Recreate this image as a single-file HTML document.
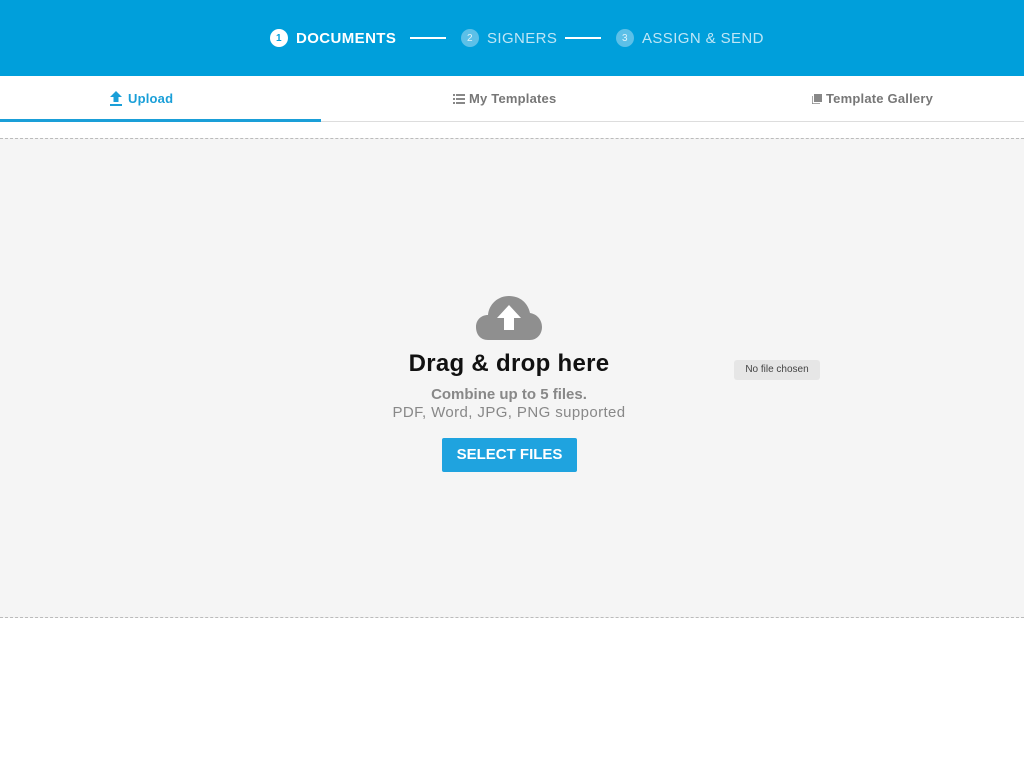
<!DOCTYPE html>
<html><head><meta charset="utf-8"><style>
*{margin:0;padding:0;box-sizing:border-box}
body{width:1024px;height:768px;background:#fff;font-family:"Liberation Sans",sans-serif;position:relative;overflow:hidden}
.hdr{position:absolute;left:0;top:0;width:1024px;height:76px;background:#009fdb}
.step{position:absolute;top:29px;font-size:15px;color:#bfe6f6;display:flex;align-items:center;letter-spacing:.4px}
.num{width:18px;height:18px;border-radius:50%;background:#5cc0e8;color:#dff3fb;font-size:10px;display:inline-flex;align-items:center;justify-content:center;margin-right:8px}
.line{position:absolute;top:37px;height:2px;background:#fff;width:36px}
.tabs{position:absolute;top:76px;left:0;width:1024px;height:46px;border-bottom:1px solid #ddd}
.tab{position:absolute;top:15px;font-size:13px;font-weight:bold;color:#777;display:flex;align-items:center;letter-spacing:.2px}
.drop{position:absolute;top:138px;left:0;width:1024px;height:480px;background:#f5f5f5;border-top:1px dashed #bbb;border-bottom:1px dashed #bbb}
</style></head><body>
<div class="hdr">
 <div class="step" style="left:270px;color:#fff;font-weight:bold"><span class="num" style="background:#fff;color:#009fdb;font-weight:bold">1</span>DOCUMENTS</div>
 <div class="line" style="left:410px"></div>
 <div class="step" style="left:461px"><span class="num">2</span>SIGNERS</div>
 <div class="line" style="left:565px"></div>
 <div class="step" style="left:616px"><span class="num">3</span>ASSIGN &amp; SEND</div>
</div>
<div class="tabs">
 <div class="tab" style="left:109px;color:#1a9fd8"><svg width="14" height="15" viewBox="0 0 14 15" style="margin-right:5px"><path d="M7 0L13 6H9.5V11H4.5V6H1Z" fill="#1a9fd8"/><rect x="1" y="13" width="12" height="2" fill="#1a9fd8"/></svg>Upload</div>
 <div class="tab" style="left:453px"><svg width="12" height="10" viewBox="0 0 12 10" style="margin-right:4px"><g fill="#888"><rect x="0" y="0" width="2" height="2"/><rect x="3" y="0" width="9" height="2"/><rect x="0" y="4" width="2" height="2"/><rect x="3" y="4" width="9" height="2"/><rect x="0" y="8" width="2" height="2"/><rect x="3" y="8" width="9" height="2"/></g></svg>My Templates</div>
 <div class="tab" style="left:812px"><svg width="10" height="10" viewBox="0 0 10 10" style="margin-right:4px"><rect x="2" y="0" width="8" height="8" fill="#888"/><path d="M0 2V10H8" stroke="#888" fill="none" stroke-width="1.5"/></svg>Template Gallery</div>
 <div style="position:absolute;left:0;top:43px;width:321px;height:3px;background:#1a9fd8"></div>
</div>
<div class="drop">
 <svg style="position:absolute;left:476px;top:157px" width="66" height="44" viewBox="0 0 66 44"><path d="M12 44C4 44 0 38 0 31C0 24 5 19 12 19C13 8 22 0 33 0C44 0 52 7 54 17C61 18 66 24 66 31C66 38 61 44 54 44Z" fill="#8f8f8f"/><path d="M33 9L45 22H38V34H28V22H21Z" fill="#fff"/></svg>
 <div style="position:absolute;left:0;width:1018px;top:211px;text-align:center;font-size:24px;font-weight:bold;color:#111;letter-spacing:.3px">Drag &amp; drop here</div>
 <div style="position:absolute;left:0;width:1018px;top:247px;text-align:center;font-size:15px;font-weight:bold;color:#888">Combine up to 5 files.</div>
 <div style="position:absolute;left:0;width:1018px;top:265px;text-align:center;font-size:15px;color:#888;letter-spacing:.4px">PDF, Word, JPG, PNG supported</div>
 <div style="position:absolute;left:442px;top:299px;width:135px;height:34px;background:#1fa3df;border-radius:2px;color:#fff;font-size:15px;font-weight:bold;text-align:center;line-height:34px">SELECT FILES</div>
 <div style="position:absolute;left:734px;top:221px;width:86px;height:20px;background:#e6e6e6;border-radius:3px;font-size:10px;color:#444;text-align:center;line-height:20px">No file chosen</div>
</div>
</body></html>
